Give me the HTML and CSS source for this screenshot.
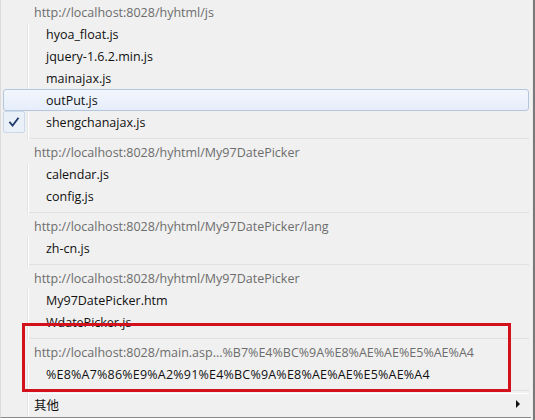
FILE: index.html
```html
<!DOCTYPE html>
<html>
<head>
<meta charset="utf-8">
<link rel="stylesheet" href="styles.css">
</head>
<body>
<div class="screen">
  <div class="menu">
    <div class="gutter"></div>
    <div class="row header">http://localhost:8028/hyhtml/js</div>
    <div class="row item">hyoa_float.js</div>
    <div class="row item">jquery-1.6.2.min.js</div>
    <div class="row item">mainajax.js</div>
    <div class="row item hover">outPut.js</div>
    <div class="row item checked"><span class="check"><svg width="12" height="11" viewBox="0 0 12 11"><path d="M2 5.5 L4.6 8.6 L10 1.5" fill="none" stroke="#1d3a6b" stroke-width="1.8" stroke-linecap="square"/></svg></span>shengchanajax.js</div>
    <div class="sep"></div>
    <div class="row header">http://localhost:8028/hyhtml/My97DatePicker</div>
    <div class="row item">calendar.js</div>
    <div class="row item">config.js</div>
    <div class="sep"></div>
    <div class="row header">http://localhost:8028/hyhtml/My97DatePicker/lang</div>
    <div class="row item">zh-cn.js</div>
    <div class="sep"></div>
    <div class="row header">http://localhost:8028/hyhtml/My97DatePicker</div>
    <div class="row item">My97DatePicker.htm</div>
    <div class="row item">WdatePicker.js</div>
    <div class="sep"></div>
    <div class="row header">http://localhost:8028/main.asp...%B7%E4%BC%9A%E8%AE%AE%E5%AE%A4</div>
    <div class="row item pct">%E8%A7%86%E9%A2%91%E4%BC%9A%E8%AE%AE%E5%AE%A4</div>
    <div class="sep"></div>
    <div class="row other">其他<span class="arrow"></span></div>
    <div class="redbox"></div>
  </div>
  <div class="edge"></div>
</div>
</body>
</html>
```
FILE: styles.css
```css
* { box-sizing: border-box; }
html, body { margin: 0; padding: 0; background: #fff; }
.screen {
  width: 535px;
  height: 420px;
  display: flex;
  background: #fff;
  overflow: hidden;
}
.menu {
  position: relative;
  width: 531px;
  height: 418px;
  background: #f0f0f0;
  border-left: 1px solid #dcdcdc;
  border-bottom: 1px solid #8a8a8a;
  padding: 1px 2px 0 2px;
  display: flex;
  flex-direction: column;
  font-family: "Open Sans", "Noto Sans CJK SC", sans-serif;
  font-size: 12.5px;
  overflow: hidden;
}
.gutter {
  position: absolute;
  left: 26px;
  top: 0;
  bottom: 0;
  width: 2px;
  border-left: 1px solid #e2e3e3;
  border-right: 1px solid #ffffff;
}
.row {
  position: relative;
  height: 22px;
  flex: 0 0 22px;
  display: flex;
  align-items: center;
  white-space: nowrap;
}
.header {
  padding-left: 31px;
  color: #6d6d6d;
  background: #f0f0f0;
  z-index: 1;
}
.item {
  padding-left: 43px;
  color: #111;
}
.pct {
  letter-spacing: 0.2px;
}
.hover {
  border: 1px solid #b4c6de;
  border-radius: 3px;
  background: linear-gradient(#f2f6fc, #e6eefa);
  padding-left: 42px;
}
.check {
  position: absolute;
  left: 0;
  top: 0;
  width: 22px;
  height: 22px;
  border: 1px solid #ccd9ea;
  border-radius: 2px;
  background: #eaf0f8;
  display: flex;
  align-items: center;
  justify-content: center;
}
.sep {
  flex: 0 0 8px;
  height: 8px;
  margin-left: 26px;
  position: relative;
  z-index: 1;
}
.sep::after {
  content: "";
  position: absolute;
  left: 0;
  right: 0;
  top: 5px;
  height: 2px;
  border-top: 1px solid #e0e0e0;
  border-bottom: 1px solid #ffffff;
}
.other {
  padding-left: 31px;
  color: #111;
}
.arrow {
  position: absolute;
  right: 9px;
  top: 7px;
  width: 0;
  height: 0;
  border-top: 4px solid transparent;
  border-bottom: 4px solid transparent;
  border-left: 4px solid #111;
}
.redbox {
  position: absolute;
  left: 21px;
  top: 323px;
  width: 489px;
  height: 69px;
  border: 3px solid #d2111d;
  z-index: 2;
}
.edge {
  width: 4px;
  height: 420px;
  border-left: 1px solid #f4f4f4;
  border-right: 2px solid #7a7a7a;
  background: #e8e8e8;
}
```
